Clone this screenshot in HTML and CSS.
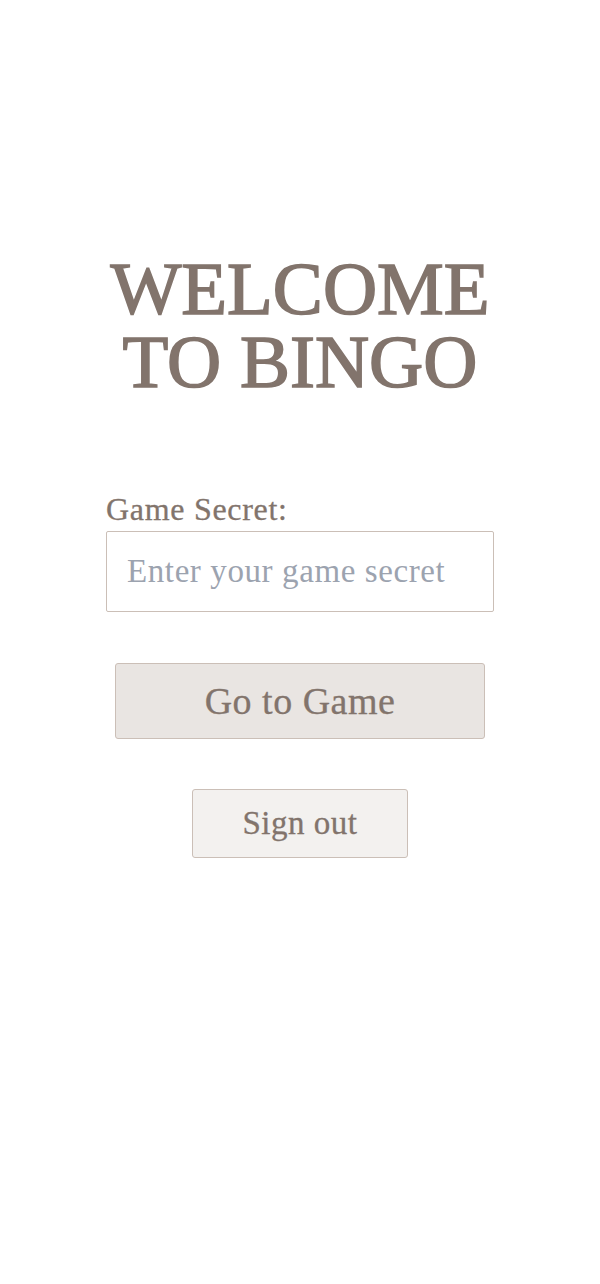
FILE: index.html
```
<!DOCTYPE html>
<html lang="en">
<head>
<meta charset="utf-8">
<title>Welcome to Bingo</title>
<link rel="stylesheet" href="styles.css">
</head>
<body>
<main class="page">
  <h1 class="title">WELCOME<br>TO BINGO</h1>
  <form class="form">
    <label class="label" for="secret">Game Secret:</label>
    <input class="input" id="secret" type="text" placeholder="Enter your game secret">
    <button class="btn-primary" type="button">Go to Game</button>
  </form>
  <button class="btn-secondary" type="button">Sign out</button>
</main>
</body>
</html>
```
FILE: styles.css
```
* { box-sizing: border-box; }
html, body { margin: 0; padding: 0; background: #ffffff; }
body {
  font-family: "Liberation Serif", "DejaVu Serif", serif;
  color: #82746c;
}
.page {
  display: flex;
  flex-direction: column;
  align-items: center;
  padding-top: 252px;
}
.title {
  margin: 0;
  font-size: 75px;
  line-height: 73px;
  font-weight: 400;
  -webkit-text-stroke: 1.6px #82746c;
  letter-spacing: 0;
  text-align: center;
  color: #82746c;
}
.form {
  width: 388px;
  margin-top: 92px;
  display: flex;
  flex-direction: column;
}
.label {
  font-size: 32px;
  line-height: 38px;
  letter-spacing: 0.7px;
  margin-bottom: 3px;
  -webkit-text-stroke: 0.3px #82746c;
}
.input {
  height: 81px;
  border: 1.5px solid #cbbfb7;
  border-radius: 2px;
  padding: 0 20px;
  font-family: inherit;
  font-size: 33px;
  letter-spacing: 0.6px;
  color: #82746c;
  background: #fff;
  outline: none;
}
.input::placeholder { color: #9ca3af; }
.btn-primary {
  align-self: center;
  width: 370px;
  height: 76px;
  margin-top: 51px;
  background: #e9e5e2;
  border: 1.5px solid #cbbfb7;
  border-radius: 3px;
  font-family: inherit;
  font-size: 38px;
  letter-spacing: 0.5px;
  color: #82746c;
  -webkit-text-stroke: 0.3px #82746c;
}
.btn-secondary {
  width: 216px;
  height: 69px;
  margin-top: 50px;
  background: #f3f1ef;
  border: 1.5px solid #cbbfb7;
  border-radius: 3px;
  font-family: inherit;
  font-size: 33px;
  letter-spacing: 0.5px;
  color: #82746c;
  -webkit-text-stroke: 0.3px #82746c;
}
```
